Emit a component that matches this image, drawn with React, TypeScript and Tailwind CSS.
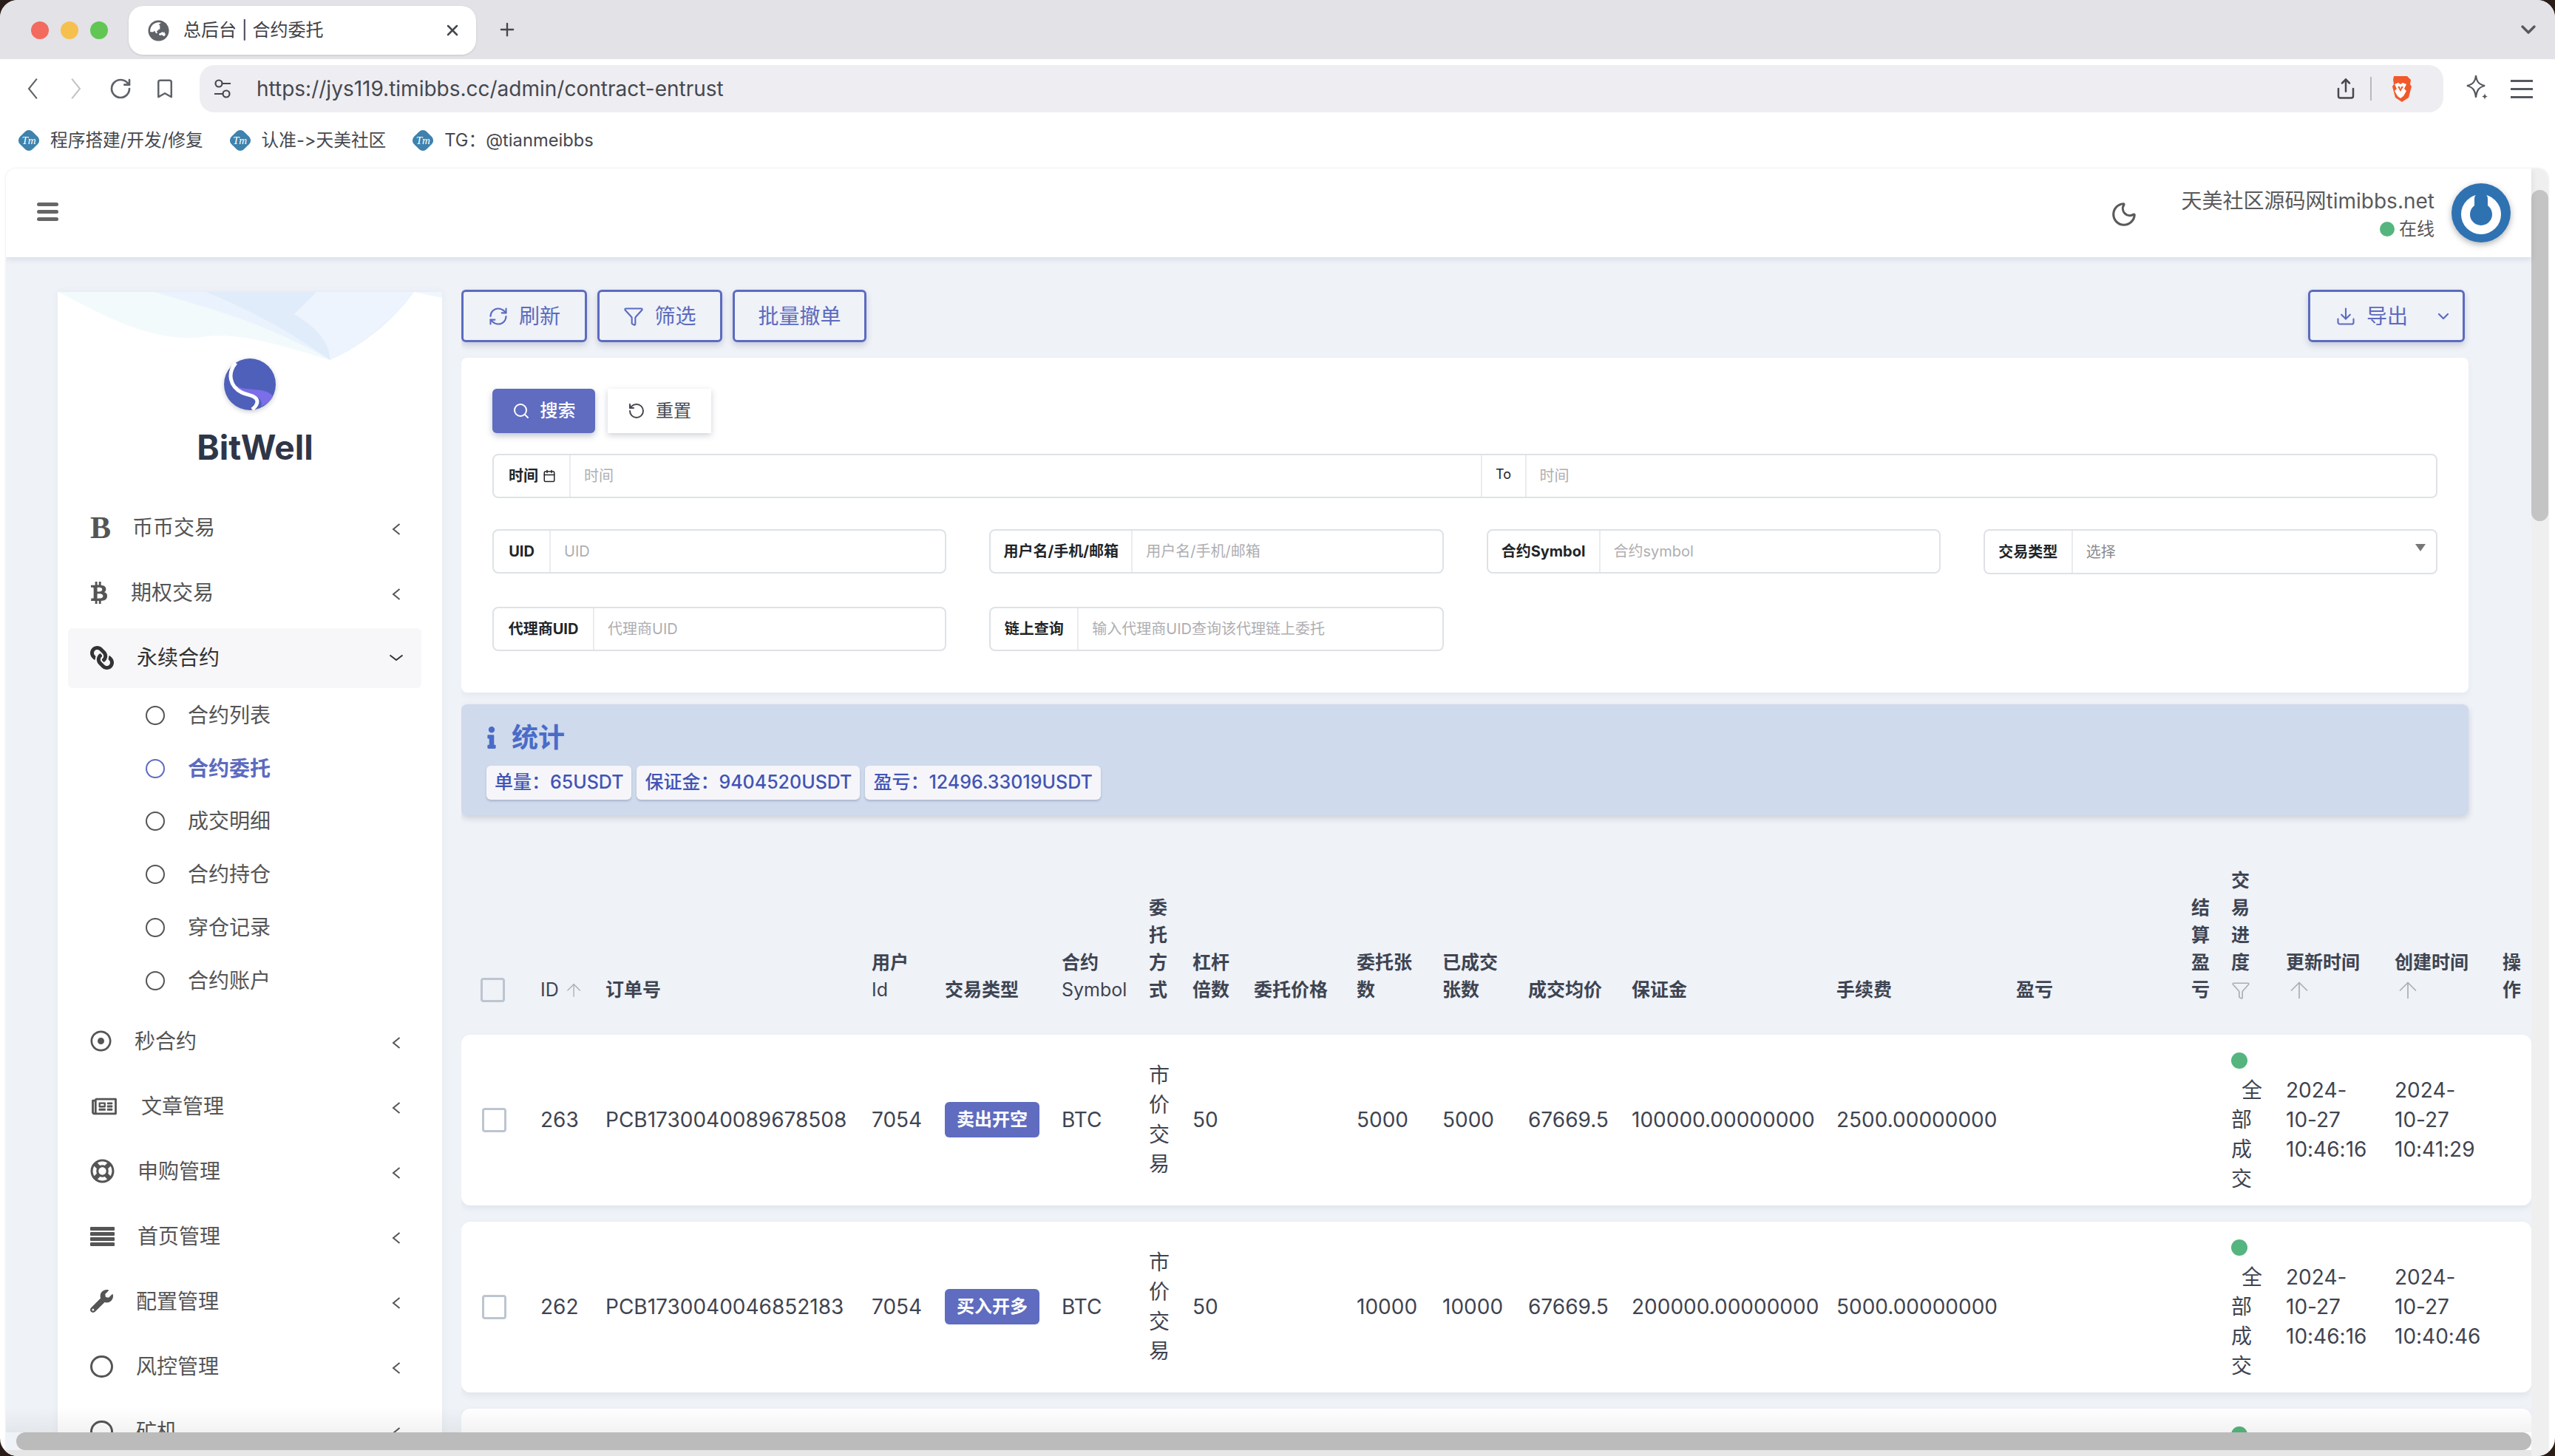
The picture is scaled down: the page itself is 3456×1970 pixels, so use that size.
import {
  ArrowUp, Calendar, ChevronDown, Download, Funnel, Moon, Plus, RefreshCw, RotateCcw, RotateCw, Search, Share, Bookmark, X,
} from "lucide-react";
import {
  FaBtc, FaGlobeAsia, FaInfo, FaLink, FaRegDotCircle, FaRegLifeRing, FaRegNewspaper, FaWrench,
} from "react-icons/fa";
import type { ReactNode } from "react";

const TRACKS = "grid grid-cols-[107px_88px_360px_99px_158px_118px_59px_83px_139px_116px_116px_140px_277px_243px_237px_54px_74px_147px_146px_39px]";

const rows = [
  { id: "263", order: "PCB1730040089678508", side: "卖出开空", qty: "5000", done: "5000", margin: "100000.00000000", fee: "2500.00000000", created: "10:41:29" },
  { id: "262", order: "PCB1730040046852183", side: "买入开多", qty: "10000", done: "10000", margin: "200000.00000000", fee: "5000.00000000", created: "10:40:46" },
];

function NavItem({ icon, label, open }: { icon: ReactNode; label: string; open?: boolean }) {
  return (
    <div className={`ml-[14px] mr-[28px] flex h-[88px] items-center ${open ? "text-[#333]" : "text-[#555]"}`}>
      <div className={`flex h-[81px] w-full items-center gap-[31px] rounded-[6px] pl-[30px] ${open ? "bg-[#f7f7f9]" : ""}`}>
        <span className="flex h-[32px] items-center">{icon}</span>
        <span className="text-[28px]">{label}</span>
        {open ? (
          <svg viewBox="0 0 20 10" className="ml-auto mr-[24px] h-[10px] w-[20px]" fill="none" stroke="currentColor" strokeWidth="2">
            <path d="M1.5 1.5 10 8l8.5-6.500" />
          </svg>
        ) : (
          <svg viewBox="0 0 12 18" className="ml-auto mr-[28px] mt-[4px] h-[18px] w-[12px]" fill="none" stroke="currentColor" strokeWidth="2">
            <path d="M10.5 2 2 9l8.5 7" />
          </svg>
        )}
      </div>
    </div>
  );
}

function SubItem({ label, active }: { label: string; active?: boolean }) {
  return (
    <div className={`flex h-[71.800px] items-center pl-[119px] text-[28px] ${active ? "font-bold text-[#5c6bc0]" : "text-[#555]"}`}>
      <span className={`mr-[31px] h-[26px] w-[26px] rounded-full border-[2.500px] ${active ? "border-[#5c6bc0]" : "border-[#555]"}`} />
      {label}
    </div>
  );
}

function Field({ label, placeholder, width }: { label: string; placeholder: string; width: string }) {
  return (
    <div className="flex h-[60px] items-stretch rounded-[8px] border-2 border-[#dee2e6] bg-white">
      <label className={`flex flex-none items-center justify-center whitespace-nowrap border-r-2 border-[#e9ecef] text-[20px] font-bold text-[#212529] ${width}`}>{label}</label>
      <input placeholder={placeholder} className="min-w-0 flex-1 bg-transparent px-[18px] text-[20px] outline-none placeholder:text-[#aeaeb2]" />
    </div>
  );
}

function ToolButton({ children, width }: { children: ReactNode; width: string }) {
  return (
    <button className={`flex h-[71px] items-center justify-center gap-[14px] rounded-[6px] border-[3px] border-[#5c6bc0] text-[28px] text-[#5c6bc0] shadow-[0_4px_8px_rgba(60,70,110,0.22)] ${width}`}>
      {children}
    </button>
  );
}

function StatChip({ children }: { children: ReactNode }) {
  return <span className="flex h-[46px] items-center rounded-[6px] bg-[#f6f6fa] px-[11px] text-[25px] font-medium text-[#4254b5] shadow-[0_2px_3px_rgba(60,70,110,0.25)]">{children}</span>;
}

function Tm() {
  return (
    <span className="grid h-[30px] w-[30px] place-items-center">
      <span className="col-start-1 row-start-1 h-[24px] w-[24px] rotate-45 rounded-[7px] bg-[#3e82ad]" />
      <span className="relative col-start-1 row-start-1 font-['Liberation_Serif',serif] text-[15px] italic text-white">Tm</span>
    </span>
  );
}

function Head({ children, className = "" }: { children?: ReactNode; className?: string }) {
  return <div className={`pr-[29px] ${className}`}>{children}</div>;
}

function SortArrow() {
  return <ArrowUp className="h-[36px] w-[36px] text-[#a8adb5]" strokeWidth={1.100} />;
}

function Cell({ children }: { children?: ReactNode }) {
  return <div className="flex items-center pr-[29px]">{children}</div>;
}

export default function App() {
  return (
    <div className="h-[1970px] w-[3456px] overflow-hidden bg-[#2a1d18] font-['Inter','Noto_Sans_CJK_SC',sans-serif] [font-feature-settings:'calt'_0]">
      <div className="flex h-full flex-col overflow-hidden rounded-[24px] bg-white">
        {/* tab strip */}
        <div className="flex h-[80px] items-start bg-[#e3e2e7] pl-[42px]">
          <div className="mt-[29px] flex gap-[16px]">
            <span className="h-[24px] w-[24px] rounded-full bg-[#f26b5e]" />
            <span className="h-[24px] w-[24px] rounded-full bg-[#f6c04f]" />
            <span className="h-[24px] w-[24px] rounded-full bg-[#62c655]" />
          </div>
          <div className="ml-[28px] mt-[8px] flex h-[66px] w-[470px] items-center rounded-[20px] bg-white pl-[26px] pr-[20px] text-[24px] text-[#3f4248] shadow-[0_1px_3px_rgba(0,0,0,0.12)]">
            <FaGlobeAsia className="h-[29px] w-[29px] text-[#5f6368]" />
            <span className="ml-[19px]">总后台 | 合约委托</span>
            <X className="ml-auto h-[24px] w-[24px] text-[#45484e]" strokeWidth={2.5} />
          </div>
          <Plus className="ml-[28px] mt-[26px] h-[28px] w-[28px] text-[#45484e]" strokeWidth={2} />
          <ChevronDown className="ml-auto mr-[20px] mt-[24px] h-[32px] w-[32px] text-[#55585e]" strokeWidth={2.500} />
        </div>

        {/* address bar */}
        <div className="flex h-[72px] items-end bg-white pl-[35px]">
          <div className="flex h-[64px] w-[235px] items-center text-[#5f6368]">
            <svg viewBox="0 0 18 36" className="h-[30px] w-[18px]" fill="none" stroke="currentColor" strokeWidth="2.500"><path d="M16 2 3 18l13 16" /></svg>
            <svg viewBox="0 0 18 36" className="ml-[41px] h-[30px] w-[18px] text-[#c4c4c6]" fill="none" stroke="currentColor" strokeWidth="2.500"><path d="M2 2l13 16L2 34" /></svg>
            <RotateCw className="ml-[35px] h-[32px] w-[32px]" strokeWidth={2} />
            <Bookmark className="ml-[29px] h-[34px] w-[30px]" strokeWidth={2} />
          </div>
          <div className="flex h-[64px] w-[3035px] items-center rounded-[20px] bg-[#eeedf2] pl-[18px] pr-[42px] text-[#45484e]">
            <svg viewBox="0 0 26 30" className="h-[30px] w-[26px]" fill="none" stroke="currentColor" strokeWidth="2.200">
              <circle cx="8" cy="8" r="4.500" />
              <path d="M13 8h11M2 22h11" />
              <circle cx="18" cy="22" r="4.500" />
            </svg>
            <span className="ml-[33px] text-[28px]">https://jys119.timibbs.cc/admin/contract-entrust</span>
            <Share className="ml-auto h-[34px] w-[30px]" strokeWidth={2} />
            <span className="ml-[18px] h-[32px] w-[2px] bg-[#b9b9bd]" />
            <svg viewBox="0 0 32 36" className="ml-[23px] h-[36px] w-[32px]">
              <path d="M7 1h18l5 5-1 6 2 3-4 15-9 6-9-6-4-15 2-3-1-6z" fill="#f1592a" />
              <path d="M8 12l5-2 3 2 3-2 5 2-3 6 3 3-4 7-4 3-4-3-4-7 3-3z" fill="#fff" />
              <path d="M12 15h3l1 4 1-4h3l-4 7z" fill="#f1592a" />
            </svg>
          </div>
          <div className="flex h-[64px] items-center text-[#55585e]">
            <svg viewBox="0 0 32 40" className="ml-[30px] h-[40px] w-[32px]" fill="none" stroke="currentColor" strokeWidth="2.200">
              <path d="M14 2c1 9 4 12 12 14-8 2-11 6-12 16C13 22 10 18 2 16c8-2 11-5 12-14z" />
              <path d="M26 26c.4 3 1.500 4 4 4.500-2.500.5-3.600 1.500-4 4.500-.4-3-1.500-4-4-4.500 2.500-.5 3.600-1.500 4-4.500z" fill="currentColor" stroke="none" />
            </svg>
            <span className="ml-[29px] flex flex-col gap-[8px]">
              <span className="h-[3px] w-[30px] bg-current" />
              <span className="h-[3px] w-[30px] bg-current" />
              <span className="h-[3px] w-[30px] bg-current" />
            </span>
          </div>
        </div>

        {/* bookmarks */}
        <div className="flex h-[76px] items-center gap-[35px] pl-[24px] text-[23.700px] text-[#45484e]">
          <span className="flex items-center gap-[14px]"><Tm />程序搭建/开发/修复</span>
          <span className="flex items-center gap-[14px]"><Tm />认准-&gt;天美社区</span>
          <span className="flex items-center gap-[14px]"><Tm />TG：@tianmeibbs</span>
        </div>

        {/* page */}
        <div className="relative ml-[8px] flex h-[1742px] w-[3439px] overflow-hidden rounded-t-[14px] shadow-[0_0_3px_rgba(0,0,0,0.12)]">
          <div className="flex w-[3416px] flex-col">
            <header className="relative z-10 flex h-[120px] flex-none items-center bg-white shadow-[0_3px_8px_rgba(60,70,100,0.12)]">
              <span className="ml-[42px] flex flex-col gap-[5px] pb-[4px]">
                <span className="h-[5px] w-[29px] rounded-full bg-[#666]" />
                <span className="h-[5px] w-[29px] rounded-full bg-[#666]" />
                <span className="h-[5px] w-[29px] rounded-full bg-[#666]" />
              </span>
              <Moon className="ml-auto mt-[4px] h-[38px] w-[38px] text-[#5a5a5a]" strokeWidth={2} />
              <div className="ml-[59px] mr-[23px] pt-[4px] text-right text-[#5a5a5a]">
                <div className="text-[28px] leading-[40px]">天美社区源码网timibbs.net</div>
                <div className="flex items-center justify-end gap-[6px] text-[24px] leading-[36px]">
                  <span className="h-[20px] w-[20px] rounded-full bg-[#55b57f]" />
                  在线
                </div>
              </div>
              <svg viewBox="0 0 80 80" className="mr-[28px] h-[80px] w-[80px] drop-shadow-[0_3px_4px_rgba(0,0,0,0.3)]">
                <circle cx="40" cy="40" r="40" fill="#2f72b2" />
                <circle cx="40" cy="42" r="21" fill="none" stroke="#fff" strokeWidth="12" />
                <rect x="31" y="12" width="18" height="34" rx="9" fill="#2f72b2" />
              </svg>
            </header>

            <div className="flex flex-1 gap-[26px] overflow-hidden bg-[#eff2f7] pl-[70px]">
              {/* sidebar */}
              <aside className="relative mt-[47px] w-[520px] flex-none bg-white shadow-[0_0_10px_rgba(60,70,100,0.06)]">
                <svg viewBox="0 0 520 92" className="absolute left-0 top-0 h-[92px] w-[520px]" preserveAspectRatio="none">
                  <path d="M0 0h260L368 92C320 78 240 50 190 62 120 66 60 30 0 0z" fill="#f3fafb" />
                  <path d="M130 0c60 18 150 40 238 92L300 0z" fill="#eaf3fd" />
                  <path d="M200 0c50 20 110 50 168 92C420 70 460 30 482 0z" fill="#e1ecfb" />
                  <path d="M320 30c20 12 50 34 48 62 40-15 90-60 114-92H350z" fill="#edf4fe" />
                  <path d="M482 0h38v8z" fill="#f0f6fe" />
                </svg>
                <div className="relative flex flex-col items-center pt-[90px]">
                  <svg viewBox="0 0 70 70" className="h-[70px] w-[70px] drop-shadow-[0_2px_3px_rgba(0,0,0,0.2)]">
                    <circle cx="35" cy="35" r="35" fill="#4f60bb" />
                    <path d="M14 34C22 44 40 40 54 44 62 46 66 50 66 52 62 58 56 62 50 65 54 56 44 50 34 48 24 46 18 42 14 34z" fill="#7b6ee8" />
                    <path d="M16 6C4 20 8 38 24 46 32 50 44 50 45 58 45 62 42 66 38 69" fill="none" stroke="#fff" strokeWidth="5" />
                  </svg>
                  <div className="ml-[14px] mt-[25px] text-[46px] font-bold leading-[50px] text-[#2f3648]">BitWell</div>
                </div>
                <nav className="relative mt-[40px]">
                  <NavItem label="币币交易" icon={<span className="w-[26px] font-['Liberation_Serif',serif] text-[42px] font-bold leading-none">B</span>} />
                  <NavItem label="期权交易" icon={<FaBtc className="h-[30px] w-[24px]" />} />
                  <NavItem open label="永续合约" icon={<FaLink className="h-[32px] w-[32px] -scale-x-100" />} />
                  <div className="-mt-[2px] pb-[2px]">
                    <SubItem label="合约列表" />
                    <SubItem active label="合约委托" />
                    <SubItem label="成交明细" />
                    <SubItem label="合约持仓" />
                    <SubItem label="穿仓记录" />
                    <SubItem label="合约账户" />
                  </div>
                  <NavItem label="秒合约" icon={<FaRegDotCircle className="h-[29px] w-[29px]" />} />
                  <NavItem label="文章管理" icon={<FaRegNewspaper className="h-[30px] w-[38px]" />} />
                  <NavItem label="申购管理" icon={<FaRegLifeRing className="h-[33px] w-[33px]" />} />
                  <NavItem
                    label="首页管理"
                    icon={
                      <svg viewBox="0 0 33 26" className="h-[26px] w-[33px]" fill="currentColor">
                        <rect y="0" width="33" height="5" rx="1" />
                        <rect y="7" width="33" height="5" rx="1" />
                        <rect y="14" width="33" height="5" rx="1" />
                        <rect y="21" width="33" height="5" rx="1" />
                      </svg>
                    }
                  />
                  <NavItem label="配置管理" icon={<FaWrench className="h-[31px] w-[31px]" />} />
                  <NavItem label="风控管理" icon={<span className="h-[30px] w-[31px] rounded-full border-[3px] border-current" />} />
                  <NavItem label="矿机" icon={<span className="h-[30px] w-[31px] rounded-full border-[3px] border-current" />} />
                </nav>
              </aside>

              {/* main */}
              <main className="w-[2800px] flex-none overflow-hidden pt-[44px]">
                <div className="flex w-[2710px] items-center gap-[14px]">
                  <ToolButton width="w-[170px]"><RefreshCw className="h-[28px] w-[28px]" strokeWidth={1.800} />刷新</ToolButton>
                  <ToolButton width="w-[169px]"><Funnel className="h-[28px] w-[28px]" strokeWidth={1.800} />筛选</ToolButton>
                  <ToolButton width="w-[181px]">批量撤单</ToolButton>
                  <button className="ml-auto flex h-[71px] w-[212px] items-center rounded-[6px] border-[3px] border-[#5c6bc0] pl-[34px] text-[28px] text-[#5c6bc0] shadow-[0_4px_8px_rgba(60,70,110,0.22)]">
                    <Download className="h-[28px] w-[28px]" strokeWidth={1.800} />
                    <span className="ml-[14px]">导出</span>
                    <ChevronDown className="ml-auto mr-[14px] h-[24px] w-[24px]" strokeWidth={2.200} />
                  </button>
                </div>

                <section className="mt-[21px] w-[2715px] rounded-[8px] bg-white px-[42px] pb-[56px] pt-[42px] shadow-[0_4px_10px_rgba(60,70,100,0.05)]">
                  <div className="flex gap-[17px] text-[24px]">
                    <button className="flex h-[60px] w-[139px] items-center justify-center gap-[14px] rounded-[6px] bg-[#5f6cc0] font-medium text-white shadow-[0_4px_8px_rgba(60,70,110,0.3)]">
                      <Search className="h-[24px] w-[24px]" strokeWidth={2} />搜索
                    </button>
                    <button className="flex h-[60px] w-[140px] items-center justify-center gap-[14px] bg-white text-[#45484e] shadow-[0_3px_8px_rgba(60,70,100,0.25)]">
                      <RotateCcw className="h-[24px] w-[24px]" strokeWidth={2} />重置
                    </button>
                  </div>

                  <div className="mt-[28px] flex h-[60px] items-stretch rounded-[8px] border-2 border-[#dee2e6]">
                    <label className="flex w-[104px] items-center gap-[6px] border-r-2 border-[#e9ecef] pl-[20px] text-[20px] font-bold text-[#212529]">
                      时间 <Calendar className="h-[20px] w-[18px]" strokeWidth={2} />
                    </label>
                    <input placeholder="时间" className="min-w-0 flex-1 px-[18px] text-[20px] outline-none placeholder:text-[#aeaeb2]" />
                    <span className="flex w-[62px] items-start justify-center border-x-2 border-[#e9ecef] pt-[12px] text-[18px] text-[#212529]">To</span>
                    <input placeholder="时间" className="min-w-0 flex-1 px-[18px] text-[20px] outline-none placeholder:text-[#aeaeb2]" />
                  </div>

                  <div className="mt-[42px] grid grid-cols-4 gap-x-[58px] gap-y-[44px]">
                    <Field width="w-[77px]" label="UID" placeholder="UID" />
                    <Field width="w-[192px]" label="用户名/手机/邮箱" placeholder="用户名/手机/邮箱" />
                    <Field width="w-[152px]" label="合约Symbol" placeholder="合约symbol" />
                    <div className="flex h-[61px] items-stretch rounded-[8px] border-2 border-[#dee2e6]">
                      <label className="flex w-[119px] flex-none items-center justify-center whitespace-nowrap border-r-2 border-[#e9ecef] text-[20px] font-bold text-[#212529]">交易类型</label>
                      <div className="relative flex flex-1 items-center px-[18px] text-[20px] text-[#8a8a8e]">
                        选择
                        <span className="absolute right-[14px] top-[18px] h-0 w-0 border-x-[7px] border-t-[10px] border-x-transparent border-t-[#777]" />
                      </div>
                    </div>
                    <Field width="w-[136px]" label="代理商UID" placeholder="代理商UID" />
                    <Field width="w-[119px]" label="链上查询" placeholder="输入代理商UID查询该代理链上委托" />
                  </div>
                </section>

                <section className="mt-[16px] h-[150px] w-[2715px] rounded-[8px] bg-[#cfdaed] px-[34px] pt-[26px] shadow-[0_4px_8px_rgba(60,70,100,0.2)]">
                  <div className="flex h-[38px] items-center gap-[20px] text-[36px] font-semibold text-[#4a6cc7]">
                    <FaInfo className="h-[30px] w-[14px]" />统计
                  </div>
                  <div className="mt-[19px] flex gap-[7px]">
                    <StatChip>单量：65USDT</StatChip>
                    <StatChip>保证金：9404520USDT</StatChip>
                    <StatChip>盈亏：12496.33019USDT</StatChip>
                  </div>
                </section>

                {/* table head */}
                <div className={`${TRACKS} mt-[70px] items-end pb-[42px] text-[25px] font-semibold leading-[37px] text-[#3e4452]`}>
                  <div className="pb-[2px] pl-[26px]">
                    <input type="checkbox" className="block h-[33px] w-[33px] appearance-none rounded-[4px] border-[3px] border-[#bcc5d0]" />
                  </div>
                  <Head className="flex items-center gap-[6px] font-normal">ID<SortArrow /></Head>
                  <Head>订单号</Head>
                  <Head>用户<span className="font-normal">Id</span></Head>
                  <Head>交易类型</Head>
                  <Head>合约<span className="font-normal">Symbol</span></Head>
                  <Head>委托方式</Head>
                  <Head>杠杆倍数</Head>
                  <Head>委托价格</Head>
                  <Head>委托张数</Head>
                  <Head>已成交张数</Head>
                  <Head>成交均价</Head>
                  <Head>保证金</Head>
                  <Head>手续费</Head>
                  <Head>盈亏</Head>
                  <Head>结算盈亏</Head>
                  <Head>
                    交易进度
                    <div className="flex h-[37px] items-center"><Funnel className="h-[26px] w-[26px] text-[#a8adb5]" strokeWidth={1.500} /></div>
                  </Head>
                  <Head>更新时间<div className="flex h-[37px] items-center"><SortArrow /></div></Head>
                  <Head>创建时间<div className="flex h-[37px] items-center"><SortArrow /></div></Head>
                  <div>操作</div>
                </div>

                {/* table rows */}
                <div className="flex flex-col gap-[22px] text-[28px] leading-[40px] text-[#3f4450]">
                  {[...rows, null].map((row, i) => (
                    <div key={i} className={`${TRACKS} h-[231px] rounded-[12px] bg-white pb-[16px] pt-[15px] shadow-[0_4px_8px_rgba(60,70,100,0.08)]`}>
                      <Cell>
                        {row && <input type="checkbox" className="ml-[28px] h-[33px] w-[33px] appearance-none rounded-[4px] border-[3px] border-[#bcc5d0]" />}
                      </Cell>
                      <Cell>{row?.id}</Cell>
                      <Cell>{row?.order}</Cell>
                      <Cell>{row && "7054"}</Cell>
                      <Cell>
                        {row && <span className="flex h-[48px] w-[128px] items-center justify-center rounded-[6px] bg-[#5f6cc0] text-[24px] font-bold text-white">{row.side}</span>}
                      </Cell>
                      <Cell>{row && "BTC"}</Cell>
                      <Cell>{row && "市价交易"}</Cell>
                      <Cell>{row && "50"}</Cell>
                      <Cell />
                      <Cell>{row?.qty}</Cell>
                      <Cell>{row?.done}</Cell>
                      <Cell>{row && "67669.5"}</Cell>
                      <Cell>{row?.margin}</Cell>
                      <Cell>{row?.fee}</Cell>
                      <Cell />
                      <Cell />
                      <div className="pr-[29px]">
                        <div className="flex h-[40px] items-center">
                          <span className="h-[22px] w-[22px] rounded-full bg-[#55b57f]" />
                        </div>
                        {row && <div className="indent-[14px]">全部成交</div>}
                      </div>
                      <Cell>{row && <span className="whitespace-nowrap">2024-<br />10-27<br />10:46:16</span>}</Cell>
                      <Cell>{row && <span className="whitespace-nowrap">2024-<br />10-27<br />{row.created}</span>}</Cell>
                      <Cell />
                    </div>
                  ))}
                </div>
              </main>
            </div>
          </div>

          {/* vertical scrollbar */}
          <div className="flex-none w-[23px] bg-[#efefef] pt-[29px]">
            <div className="h-[448px] rounded-[12px] bg-[#c4c4c4]" />
          </div>

          {/* horizontal scrollbar, lies over the page */}
          <div className="absolute bottom-[8px] left-0 h-[24px] w-[3416px]">
            <div className="absolute -top-[34px] h-[34px] w-full bg-gradient-to-b from-transparent to-black/5" />
            <div className="ml-[14px] h-full rounded-[12px] bg-[#bbbbbb]" />
          </div>
          <div className="absolute bottom-0 left-0 h-[8px] w-[3416px] bg-[#e6e6e6]" />
        </div>
      </div>
    </div>
  );
}
